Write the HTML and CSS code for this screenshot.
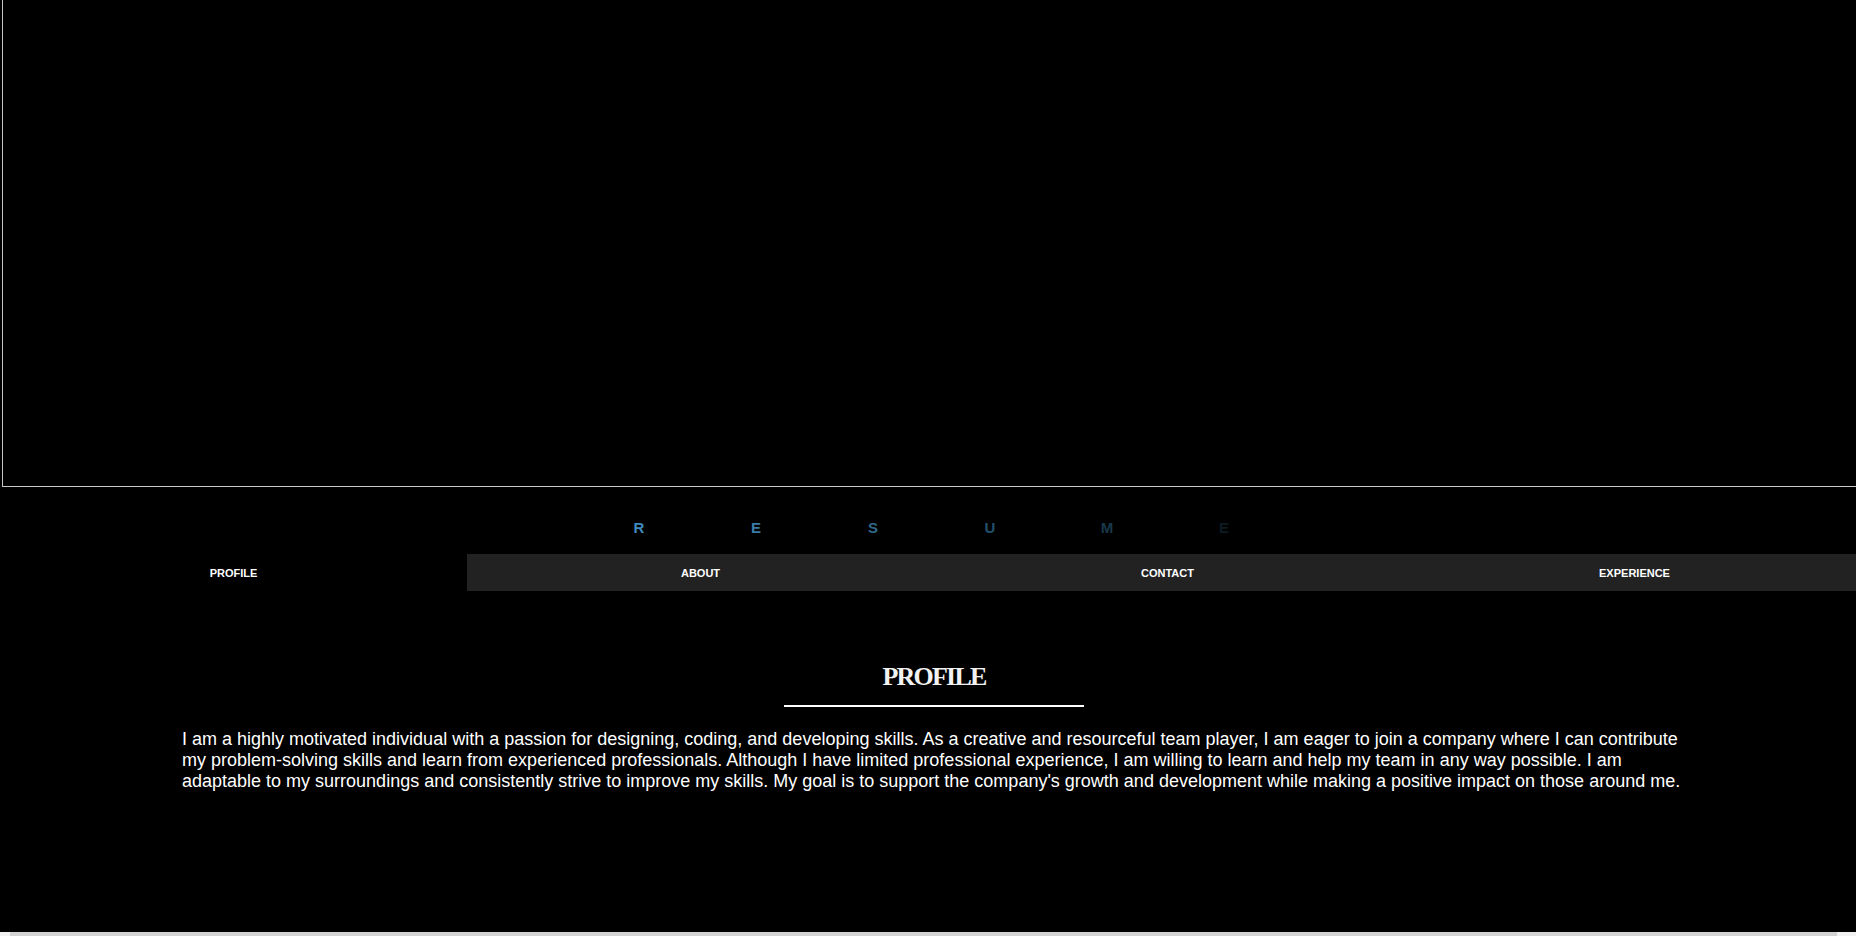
FILE: index.html
```html
<!DOCTYPE html>
<html lang="en">
<head>
<meta charset="utf-8">
<title>Resume</title>
<link rel="stylesheet" href="styles.css">
</head>
<body>
<div class="page">
  <div class="frame"></div>
  <div class="letters">
    <span class="l1">R</span>
    <span class="l2">E</span>
    <span class="l3">S</span>
    <span class="l4">U</span>
    <span class="l5">M</span>
    <span class="l6">E</span>
  </div>
  <nav class="tabs">
    <div class="tab active">PROFILE</div>
    <div class="tab">ABOUT</div>
    <div class="tab">CONTACT</div>
    <div class="tab">EXPERIENCE</div>
  </nav>
  <section class="content">
    <h2 class="title">PROFILE</h2>
    <div class="rule"></div>
    <p class="text">I am a highly motivated individual with a passion for designing, coding, and developing skills. As a creative and resourceful team player, I am eager to join a company where I can contribute my problem-solving skills and learn from experienced professionals. Although I have limited professional experience, I am willing to learn and help my team in any way possible. I am adaptable to my surroundings and consistently strive to improve my skills. My goal is to support the company's growth and development while making a positive impact on those around me.</p>
  </section>
</div>
<div class="hscroll"><div class="thumb"></div></div>
</body>
</html>
```

FILE: styles.css
```css
html, body {
  margin: 0;
  padding: 0;
  background: #000;
  overflow: hidden;
  height: 936px;
}
body {
  font-family: "Liberation Sans", Arial, sans-serif;
  color: #fff;
}
.page {
  width: 1868px;
  height: 932px;
  display: flex;
  flex-direction: column;
}
.frame {
  margin-left: 2px;
  height: 486px;
  border-left: 1px solid #c4c4c4;
  border-bottom: 1px solid #c8c8c8;
  flex: none;
}
.letters {
  box-sizing: border-box;
  height: 67px;
  padding-top: 32px;
  padding-right: 5px;
  display: flex;
  justify-content: center;
  font-size: 15px;
  font-weight: bold;
  line-height: 17px;
  flex: none;
}
.letters span {
  width: 117px;
  text-align: center;
}
.l1 { color: #3f8abd; }
.l2 { color: #397ba6; }
.l3 { color: #2f6789; }
.l4 { color: #23506a; }
.l5 { color: #18384b; }
.l6 { color: #0c1b24; }
.tabs {
  display: flex;
  height: 37px;
  background: #222;
  flex: none;
}
.tab {
  flex: 1;
  display: flex;
  align-items: center;
  justify-content: center;
  font-size: 11px;
  font-weight: bold;
  color: #fff;
}
.tab.active {
  background: #000;
}
.content {
  padding-top: 71px;
  display: flex;
  flex-direction: column;
  align-items: center;
}
.title {
  margin: 0;
  font-family: "Liberation Serif", "Times New Roman", serif;
  font-size: 26px;
  line-height: 30px;
  font-weight: bold;
  letter-spacing: -1.8px;
  color: #f2f2f2;
}
.rule {
  margin-top: 13px;
  width: 300px;
  height: 2px;
  background: #fff;
}
.text {
  margin: 22px 0 0;
  width: 1504px;
  font-size: 18px;
  line-height: 21px;
  color: #fff;
}
.hscroll {
  width: 1856px;
  height: 4px;
  background: #f1f1f1;
  display: flex;
}
.thumb {
  margin-left: 10px;
  width: 1827px;
  background: #d3d3d3;
}
```
